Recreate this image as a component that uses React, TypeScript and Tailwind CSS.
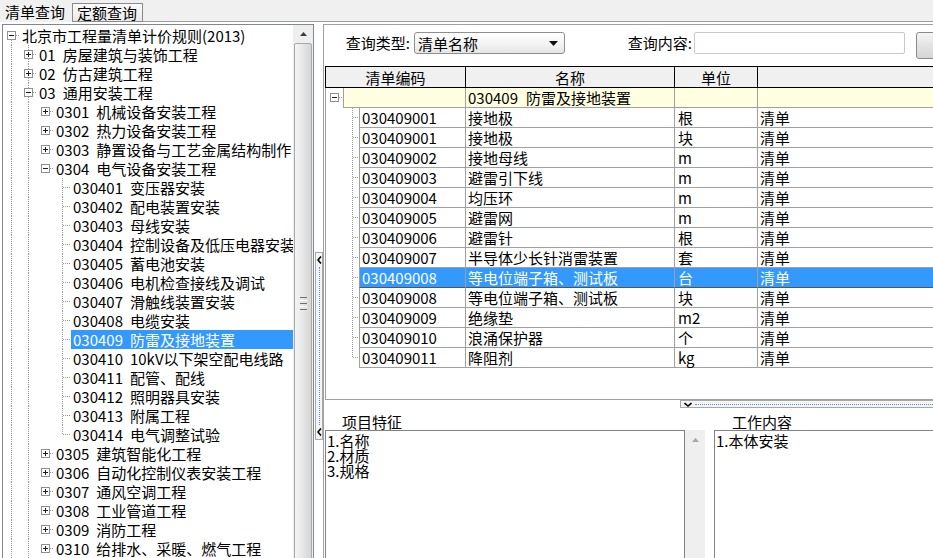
import React from 'react';

type TNode = { level: number; code?: string; name: string; exp?: '+' | '-'; sel?: boolean; last?: boolean };

const tree: TNode[] = [
  { level: 0, name: '北京市工程量清单计价规则(2013)', exp: '-' },
  { level: 1, code: '01', name: '房屋建筑与装饰工程', exp: '+' },
  { level: 1, code: '02', name: '仿古建筑工程', exp: '+' },
  { level: 1, code: '03', name: '通用安装工程', exp: '-' },
  { level: 2, code: '0301', name: '机械设备安装工程', exp: '+' },
  { level: 2, code: '0302', name: '热力设备安装工程', exp: '+' },
  { level: 2, code: '0303', name: '静置设备与工艺金属结构制作', exp: '+' },
  { level: 2, code: '0304', name: '电气设备安装工程', exp: '-' },
  { level: 3, code: '030401', name: '变压器安装' },
  { level: 3, code: '030402', name: '配电装置安装' },
  { level: 3, code: '030403', name: '母线安装' },
  { level: 3, code: '030404', name: '控制设备及低压电器安装' },
  { level: 3, code: '030405', name: '蓄电池安装' },
  { level: 3, code: '030406', name: '电机检查接线及调试' },
  { level: 3, code: '030407', name: '滑触线装置安装' },
  { level: 3, code: '030408', name: '电缆安装' },
  { level: 3, code: '030409', name: '防雷及接地装置', sel: true },
  { level: 3, code: '030410', name: '10kV以下架空配电线路' },
  { level: 3, code: '030411', name: '配管、配线' },
  { level: 3, code: '030412', name: '照明器具安装' },
  { level: 3, code: '030413', name: '附属工程' },
  { level: 3, code: '030414', name: '电气调整试验', last: true },
  { level: 2, code: '0305', name: '建筑智能化工程', exp: '+' },
  { level: 2, code: '0306', name: '自动化控制仪表安装工程', exp: '+' },
  { level: 2, code: '0307', name: '通风空调工程', exp: '+' },
  { level: 2, code: '0308', name: '工业管道工程', exp: '+' },
  { level: 2, code: '0309', name: '消防工程', exp: '+' },
  { level: 2, code: '0310', name: '给排水、采暖、燃气工程', exp: '+' },
  { level: 2, code: '0311', name: '通信设备及线路工程', exp: '+' },
];

const rows: { code: string; name: string; unit: string; sel?: boolean }[] = [
  { code: '030409001', name: '接地极', unit: '根' },
  { code: '030409001', name: '接地极', unit: '块' },
  { code: '030409002', name: '接地母线', unit: 'm' },
  { code: '030409003', name: '避雷引下线', unit: 'm' },
  { code: '030409004', name: '均压环', unit: 'm' },
  { code: '030409005', name: '避雷网', unit: 'm' },
  { code: '030409006', name: '避雷针', unit: '根' },
  { code: '030409007', name: '半导体少长针消雷装置', unit: '套' },
  { code: '030409008', name: '等电位端子箱、测试板', unit: '台', sel: true },
  { code: '030409008', name: '等电位端子箱、测试板', unit: '块' },
  { code: '030409009', name: '绝缘垫', unit: 'm2' },
  { code: '030409010', name: '浪涌保护器', unit: '个' },
  { code: '030409011', name: '降阻剂', unit: 'kg' },
];

const DOT = { stroke: '#9a9a9a', strokeWidth: 1, strokeDasharray: '1 1' };

function Conn({
  w = 17,
  h = 19,
  x = 8,
  cyPix = 9,
  vTop,
  vBot,
  hr,
  box,
}: {
  w?: number;
  h?: number;
  x?: number;
  cyPix?: number;
  vTop?: boolean;
  vBot?: boolean;
  hr?: boolean;
  box?: '+' | '-';
}) {
  const cx = x + 0.5;
  const cy = cyPix + 0.5;
  return (
    <svg width={w} height={h} className="block shrink-0" shapeRendering="crispEdges">
      {vTop && <line x1={cx} x2={cx} y1={0} y2={cy} {...DOT} />}
      {vBot && <line x1={cx} x2={cx} y1={cy} y2={h} {...DOT} />}
      {hr && <line x1={box ? x + 5 : cx} x2={w} y1={cy} y2={cy} {...DOT} />}
      {box && (
        <g>
          <rect x={x - 3.5} y={cyPix - 3.5} width={8} height={8} fill="#ffffff" stroke="#8e8f8f" />
          <line x1={x - 2} x2={x + 3} y1={cy} y2={cy} stroke="#1e1e1e" />
          {box === '+' && <line x1={cx} x2={cx} y1={cyPix - 2} y2={cyPix + 3} stroke="#1e1e1e" />}
        </g>
      )}
    </svg>
  );
}

function TreeRow({ n }: { n: TNode }) {
  const cols: React.ReactNode[] = [];
  if (n.level === 0) {
    cols.push(<Conn key="c0" vBot hr box={n.exp} />);
  } else {
    cols.push(<Conn key="c0" vTop vBot />);
    if (n.level === 1) {
      cols.push(<Conn key="c1" vTop vBot hr box={n.exp} />);
    } else {
      cols.push(<Conn key="c1" vTop vBot />);
      if (n.level === 2) {
        cols.push(<Conn key="c2" hr box={n.exp} />);
      } else {
        cols.push(<Conn key="c2" />);
        cols.push(<Conn key="c3" vTop vBot={!n.last} hr />);
      }
    }
  }
  return (
    <div className="flex h-[19px] items-center">
      {cols}
      <div
        className={
          n.sel
            ? 'flex h-full flex-1 items-center whitespace-nowrap bg-[#3399ff] pl-[2px] text-white'
            : 'flex h-full flex-1 items-center whitespace-nowrap pl-[2px]'
        }
      >
        {n.code && <span>{n.code}</span>}
        <span className={n.code ? 'ml-[7px]' : ''}>{n.name}</span>
      </div>
    </div>
  );
}

function VScrollThumb() {
  return (
    <div className="flex h-full w-[20px] shrink-0 flex-col bg-[#eeeeee]">
      <div className="flex h-[23px] items-center justify-center">
        <svg width="7" height="4" className="block">
          <polygon points="0,4 3.5,0 7,4" fill="#3c3c3c" />
        </svg>
      </div>
      <div className="mx-[1px] flex h-[520px] shrink-0 items-center justify-center rounded-[2px] border border-[#a9a9a9] bg-[linear-gradient(to_right,#f4f4f4,#e6e6e6_50%,#d6d6d6)]">
        <div className="flex flex-col gap-[2px]">
          <div className="h-[1px] w-[7px] bg-[#6e6e6e]" />
          <div className="h-[1px] w-[7px] bg-[#ffffff]" />
          <div className="h-[1px] w-[7px] bg-[#6e6e6e]" />
          <div className="h-[1px] w-[7px] bg-[#ffffff]" />
          <div className="h-[1px] w-[7px] bg-[#6e6e6e]" />
        </div>
      </div>
    </div>
  );
}

function Chevron({ dir }: { dir: 'left' | 'down' }) {
  if (dir === 'left')
    return (
      <svg width="5" height="8" className="block shrink-0">
        <polyline points="4,0.5 1,4 4,7.5" fill="none" stroke="#000" strokeWidth="1.6" />
      </svg>
    );
  return (
    <svg width="8" height="5" className="block shrink-0">
      <polyline points="0.5,1 4,4 7.5,1" fill="none" stroke="#000" strokeWidth="1.6" />
    </svg>
  );
}

export default function App() {
  return (
    <div className="h-[558px] w-[933px] overflow-hidden bg-[#f0f0f0] font-['Noto_Sans_CJK_SC','Noto_Sans',sans-serif] text-[15px] leading-[19px] text-black">
      {/* Tabs */}
      <div className="flex h-[22px] items-end">
        <div className="flex h-[22px] w-[72px] shrink-0 items-center pl-[5px]">清单查询</div>
        <div className="flex h-[19px] w-[71px] shrink-0 items-center border border-[#8a8a8a] bg-[linear-gradient(#fbfbfb,#e9e9e9)] pl-[4px]">
          定额查询
        </div>
        <div className="h-full flex-1 border-b border-[#a0a0a0]" />
      </div>

      {/* Body */}
      <div className="flex h-[536px] bg-white pt-[2px]">
        {/* Tree */}
        <div className="ml-[2px] flex h-[540px] w-[312px] shrink-0 border border-[#828790] bg-white">
          <div className="flex flex-1 flex-col overflow-hidden pt-[1px] pl-[0px]">
            {tree.map((n, i) => (
              <TreeRow key={i} n={n} />
            ))}
          </div>
          <VScrollThumb />
        </div>

        {/* Vertical splitter */}
        <div className="flex w-[9px] shrink-0 flex-col">
          <div className="h-[228px] shrink-0" />
          <div className="ml-[1px] flex h-[188px] w-[8px] flex-col items-center border border-[#a8a8a8] bg-[#f4f4f4] py-[3px]">
            <Chevron dir="left" />
            <div className="my-[3px] flex-1 border-l border-dotted border-[#5b8fd6]" />
            <Chevron dir="left" />
          </div>
        </div>

        {/* Right panel */}
        <div className="flex h-[540px] w-[640px] shrink-0 flex-col border border-[#a0a0a0] bg-white">
          {/* Query row */}
          <div className="mt-[7px] flex h-[22px] shrink-0 items-start">
            <div className="w-[86px] shrink-0 text-right leading-[22px]">查询类型:</div>
            <div className="ml-[4px] flex h-[22px] w-[151px] shrink-0 items-center justify-between rounded-[3px] border border-[#8f8f8f] bg-[linear-gradient(#ffffff,#f2f2f2_60%,#e4e4e4)] pl-[3px] pr-[6px]">
              <span>清单名称</span>
              <svg width="9" height="5" className="block">
                <polygon points="0,0 9,0 4.5,5" fill="#111" />
              </svg>
            </div>
            <div className="w-[127px] shrink-0 text-right leading-[22px]">查询内容:</div>
            <div className="ml-[2px] h-[22px] w-[211px] shrink-0 rounded-[2px] border border-[#c9c9c9] bg-white" />
            <div className="ml-[11px] h-[27px] w-[75px] shrink-0 rounded-[3px] border border-[#8a8a8a] bg-[linear-gradient(#f5f5f5,#e3e3e3_50%,#d6d6d6)]" />
          </div>

          {/* Grid */}
          <div className="ml-[1px] mt-[12px] flex h-[334px] w-[700px] shrink-0 flex-col border-b border-[#a0a0a0]">
            <div className="flex h-[22px] shrink-0 border border-black bg-[#f0f0f0]">
              <div className="flex w-[140px] shrink-0 items-center justify-center border-r border-black">清单编码</div>
              <div className="flex w-[209px] shrink-0 items-center justify-center border-r border-black">名称</div>
              <div className="flex w-[83px] shrink-0 items-center justify-center border-r border-black">单位</div>
              <div className="flex-1" />
            </div>
            <div className="flex flex-1 flex-col border-l border-[#a0a0a0] bg-white">
              {/* group row */}
              <div className="flex h-[20px] shrink-0">
                <Conn w={17} h={20} x={8} cyPix={9} hr box="-" />
                <div className="w-[123px] shrink-0 border-x border-b border-[#a0a0a0] bg-[#ffffe1]" />
                <div className="flex w-[209px] shrink-0 items-center whitespace-nowrap border-r border-b border-[#a0a0a0] bg-[#ffffe1] pl-[2px]">
                  <span>030409</span>
                  <span className="ml-[8px]">防雷及接地装置</span>
                </div>
                <div className="w-[83px] shrink-0 border-r border-b border-[#a0a0a0] bg-[#ffffe1]" />
                <div className="flex-1 border-b border-[#a0a0a0] bg-[#ffffe1]" />
              </div>
              {rows.map((r, i) => {
                const last = i === rows.length - 1;
                return (
                  <div key={i} className="flex h-[20px] shrink-0">
                    <div className="w-[17px] shrink-0" />
                    <Conn w={16} h={20} x={9} cyPix={9} vTop vBot={!last} hr />
                    {r.sel ? (
                      <>
                        <div className="flex w-[107px] shrink-0 items-center border-x border-b border-[#a0a0a0] border-b-[#555555] bg-[#3399ff] pl-[2px] text-white">
                          {r.code}
                        </div>
                        <div className="flex w-[209px] shrink-0 items-center whitespace-nowrap border-r border-b border-[#a0a0a0] border-b-[#555555] bg-[#3399ff] pl-[2px] text-white">
                          {r.name}
                        </div>
                        <div className="flex w-[83px] shrink-0 items-center border-r border-b border-[#a0a0a0] border-b-[#555555] bg-[#3399ff] pl-[3px] text-white">
                          {r.unit}
                        </div>
                        <div className="flex flex-1 items-center border-b border-[#555555] bg-[#3399ff] pl-[2px] text-white">
                          清单
                        </div>
                      </>
                    ) : (
                      <>
                        <div className="flex w-[107px] shrink-0 items-center border-x border-b border-[#a0a0a0] pl-[2px]">
                          {r.code}
                        </div>
                        <div className="flex w-[209px] shrink-0 items-center whitespace-nowrap border-r border-b border-[#a0a0a0] pl-[2px]">
                          {r.name}
                        </div>
                        <div className="flex w-[83px] shrink-0 items-center border-r border-b border-[#a0a0a0] pl-[3px]">
                          {r.unit}
                        </div>
                        <div className="flex flex-1 items-center border-b border-[#a0a0a0] pl-[2px]">清单</div>
                      </>
                    )}
                  </div>
                );
              })}
              <div className="flex-1" />
            </div>
          </div>

          {/* Horizontal splitter */}
          <div className="flex h-[8px] shrink-0">
            <div className="w-[356px] shrink-0" />
            <div className="flex flex-1 items-center border border-[#a8a8a8] bg-[#f4f4f4] pl-[3px]">
              <Chevron dir="down" />
              <div className="ml-[3px] flex-1 border-t border-dotted border-[#5b8fd6]" />
            </div>
          </div>

          {/* Labels */}
          <div className="flex h-[22px] shrink-0 items-center pt-[4px]">
            <div className="w-[390px] shrink-0 pl-[18px]">项目特征</div>
            <div className="pl-[18px]">工作内容</div>
          </div>

          {/* Text areas */}
          <div className="flex h-[140px] shrink-0">
            <div className="ml-[1px] w-[360px] shrink-0 border border-[#828282] bg-white pl-[1px] pt-[2px] leading-[15px]">
              <div>1.名称</div>
              <div>2.材质</div>
              <div>3.规格</div>
            </div>
            <div className="flex w-[20px] shrink-0 justify-center bg-[#efefef] pt-[8px]">
              <svg width="7" height="4" className="block">
                <polygon points="0,4 3.5,0 7,4" fill="#a6a6a6" />
              </svg>
            </div>
            <div className="ml-[9px] w-[300px] shrink-0 border border-[#828282] bg-white pl-[1px] pt-[2px] leading-[15px]">
              <div>1.本体安装</div>
            </div>
          </div>
        </div>
      </div>
    </div>
  );
}
